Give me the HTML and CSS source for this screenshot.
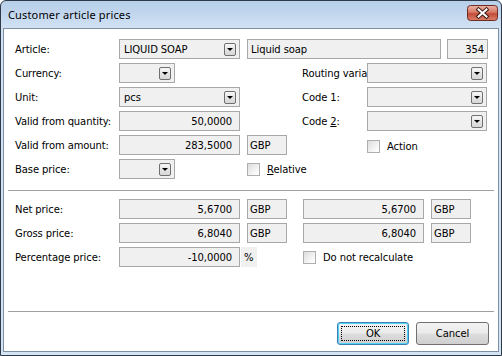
FILE: index.html
```html
<!DOCTYPE html>
<html>
<head>
<meta charset="utf-8">
<link rel="stylesheet" href="styles.css">
</head>
<body>
<div class="window">
  <div class="titlebar">
    <span class="title">Customer article prices</span>
    <div class="close">
      <svg width="31" height="16" viewBox="0 0 31 16">
        <defs>
          <linearGradient id="cg" x1="0" y1="0" x2="0" y2="1">
            <stop offset="0" stop-color="#ecb3a6"/>
            <stop offset="0.45" stop-color="#d77a66"/>
            <stop offset="0.55" stop-color="#c24b38"/>
            <stop offset="1" stop-color="#d9806a"/>
          </linearGradient>
        </defs>
        <rect x="0.5" y="0.5" width="30" height="15" rx="3" fill="url(#cg)" stroke="#6e2c22"/>
        <path d="M11.5 4.5 L19.5 11.5 M19.5 4.5 L11.5 11.5" stroke="#3c1a14" stroke-width="4" stroke-linecap="square"/>
        <path d="M11.5 4.5 L19.5 11.5 M19.5 4.5 L11.5 11.5" stroke="#ffffff" stroke-width="2" stroke-linecap="square"/>
      </svg>
    </div>
  </div>
  <div class="client">
    <div class="form">
      <div class="label r1 c1">Article:</div>
      <div class="field combo r1 c2"><span>LIQUID SOAP</span><i class="dd"></i></div>
      <div class="pair r1 c4e">
        <div class="field name">Liquid soap</div>
        <div class="field num id">354</div>
      </div>

      <div class="label r2 c1">Currency:</div>
      <div class="field combo short r2 c2"><span></span><i class="dd"></i></div>
      <div class="label r2 c6">Routing varia</div>
      <div class="field combo wide r2 c7"><span></span><i class="dd"></i></div>

      <div class="label r3 c1">Unit:</div>
      <div class="field combo r3 c2"><span>pcs</span><i class="dd"></i></div>
      <div class="label r3 c6">Code 1:</div>
      <div class="field combo wide r3 c7"><span></span><i class="dd"></i></div>

      <div class="label r4 c1">Valid from quantity:</div>
      <div class="field num r4 c2">50,0000</div>
      <div class="label r4 c6">Code <u>2</u>:</div>
      <div class="field combo wide r4 c7"><span></span><i class="dd"></i></div>

      <div class="label r5 c1">Valid from amount:</div>
      <div class="field num r5 c2">283,5000</div>
      <div class="field cur r5 c4">GBP</div>
      <div class="check action r5 c7"><i class="box"></i><span>Action</span></div>

      <div class="label r6 c1">Base price:</div>
      <div class="field combo short r6 c2"><span></span><i class="dd"></i></div>
      <div class="check r6 c4s"><i class="box"></i><span><u>R</u>elative</span></div>
    </div>

    <div class="sep"></div>

    <div class="prices">
      <div class="label r1 c1">Net price:</div>
      <div class="field num r1 c2">5,6700</div>
      <div class="field cur r1 c4">GBP</div>
      <div class="field num r1 c6">5,6700</div>
      <div class="field cur r1 c8">GBP</div>

      <div class="label r2 c1">Gross price:</div>
      <div class="field num r2 c2">6,8040</div>
      <div class="field cur r2 c4">GBP</div>
      <div class="field num r2 c6">6,8040</div>
      <div class="field cur r2 c8">GBP</div>

      <div class="label r3 c1">Percentage price:</div>
      <div class="field num r3 c2">-10,0000</div>
      <div class="pct r3 c3">%</div>
      <div class="check r3 c6s"><i class="box"></i><span>Do not recalculate</span></div>
    </div>

    <div class="sep bottom"></div>

    <div class="buttons">
      <div class="btn default">OK</div>
      <div class="btn">Cancel</div>
    </div>
  </div>
</div>
</body>
</html>
```

FILE: styles.css
```css
* { box-sizing: border-box; }
html, body { margin: 0; padding: 0; }
body {
  width: 502px;
  height: 356px;
  overflow: hidden;
  background: #ffffff;
  font-family: "DejaVu Sans", sans-serif;
  font-size: 10px;
  letter-spacing: -0.1px;
  color: #000000;
}
u { text-decoration: underline; text-underline-offset: 1px; }

.window {
  width: 502px;
  height: 356px;
  border: 1px solid #2e3a48;
  border-radius: 6px 6px 0 0;
  background: linear-gradient(#b7cfe9 0px, #c3d7ee 14px, #d1e2f4 27px, #d3e4f5 100%);
  padding: 0 2px 3px 2px;
  display: flex;
  flex-direction: column;
}

.titlebar {
  height: 27px;
  display: flex;
  align-items: flex-start;
  padding-left: 5px;
}
.title {
  font-family: "Noto Sans", sans-serif;
  font-size: 11px;
  letter-spacing: 0.15px;
  line-height: 28px;
  color: #000;
}
.close {
  margin: 4px 1px 0 auto;
  width: 31px;
  height: 16px;
}
.close svg { display: block; }

.client {
  flex: 1;
  background: #ffffff;
  border: 1px solid #7f8fa3;
  display: flex;
  flex-direction: column;
}

.form {
  display: grid;
  grid-template-columns: 104px 121px 7px 40px 15px 65px 121px;
  grid-auto-rows: 20px;
  row-gap: 4px;
  padding: 10px 0 0 11px;
}
.prices {
  display: grid;
  grid-template-columns: 104px 121px 7px 40px 16px 121px 7px 40px;
  grid-auto-rows: 20px;
  row-gap: 4px;
  padding-left: 11px;
  margin-top: 8px;
}

.r1 { grid-row: 1; }
.r2 { grid-row: 2; }
.r3 { grid-row: 3; }
.r4 { grid-row: 4; }
.r5 { grid-row: 5; }
.r6 { grid-row: 6; }
.c1 { grid-column: 1; }
.c2 { grid-column: 2; }
.c3 { grid-column: 3 / span 2; }
.c4 { grid-column: 4; }
.c4e { grid-column: 4 / 8; }
.c4s { grid-column: 4 / span 3; }
.c6 { grid-column: 6; }
.c6s { grid-column: 6 / span 3; }
.c7 { grid-column: 7; }
.c8 { grid-column: 8; }

.label {
  align-self: center;
  white-space: nowrap;
}

.field {
  height: 20px;
  border: 1px solid #a8a8a8;
  background: #f0f0f0;
  display: flex;
  align-items: center;
  padding: 0 4px;
  white-space: nowrap;
}
.num { justify-content: flex-end; padding-right: 7px; }
.cur { padding-left: 2px; }
.combo { padding-right: 3px; }
.combo.short { width: 56px; }
.combo.wide { width: 120px; }
.dd {
  margin-left: auto;
  width: 12px;
  height: 13px;
  border: 1px solid #6f6f6f;
  border-radius: 2px;
  background: linear-gradient(#f8f8f8, #e4e4e4 50%, #d6d6d6);
  display: flex;
  align-items: center;
  justify-content: center;
}
.dd::after {
  content: "";
  border-left: 3px solid transparent;
  border-right: 3px solid transparent;
  border-top: 3px solid #000;
  margin-top: 1px;
}

.pair {
  display: flex;
  gap: 6px;
}
.pair .name { flex: 1; padding-left: 3px; }
.pair .id { width: 41px; padding-right: 3px; }

.check {
  display: flex;
  align-items: center;
  gap: 7px;
  white-space: nowrap;
}
.check.action { margin-top: 3px; }
.box {
  width: 13px;
  height: 13px;
  border: 1px solid #aeaeae;
  background: linear-gradient(135deg, #dcdcdc, #f7f7f7 70%, #ffffff);
}

.pct {
  width: 16px;
  margin-left: 1px;
  background: #f0f0f0;
  display: flex;
  align-items: center;
  padding-left: 3px;
}

.sep {
  height: 1px;
  background: #a0a0a0;
  margin: 11px 4px 0;
}
.sep.bottom { margin-top: 44px; }

.buttons {
  display: flex;
  justify-content: flex-end;
  gap: 7px;
  padding-right: 9px;
  margin-top: 10px;
}
.btn {
  width: 73px;
  height: 23px;
  border: 1px solid #707070;
  border-radius: 3px;
  background: linear-gradient(#f2f2f2 0%, #ebebeb 48%, #dddddd 52%, #cfcfcf 100%);
  display: flex;
  align-items: center;
  justify-content: center;
  position: relative;
}
.btn.default {
  width: 72px;
  border-color: #3c7fb1;
  box-shadow: inset 0 0 0 1px #4fd4f7;
}
.btn.default::after {
  content: "";
  position: absolute;
  inset: 3px;
  border: 1px dotted #000;
}
```
